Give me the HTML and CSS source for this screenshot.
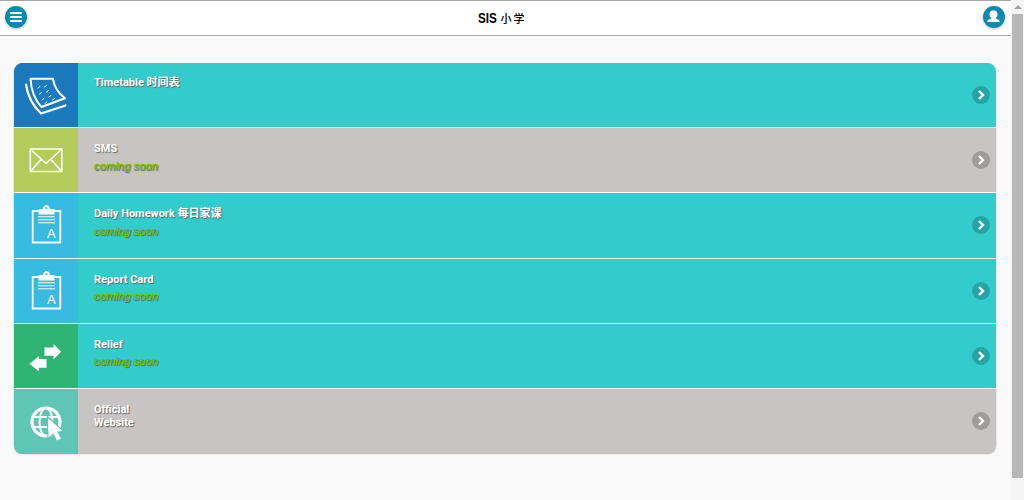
FILE: index.html
```html
<!DOCTYPE html>
<html lang="en">
<head>
<meta charset="utf-8">
<title>SIS 小学</title>
<link rel="stylesheet" href="styles.css">
</head>
<body>
<div class="page">
  <header class="topbar">
    <button class="round" aria-label="Menu">
      <svg viewBox="0 0 22 22" width="22" height="22"><path d="M6 7h10M6 11h10M6 15h10" stroke="#fff" stroke-width="2" stroke-linecap="round" fill="none"/></svg>
    </button>
    <h1 class="brand"><span class="brand-latin">SIS</span><span class="brand-cjk">小学</span></h1>
    <button class="round" aria-label="Profile">
      <svg viewBox="0 0 22 22" width="22" height="22"><path d="M11 4.500c2.200 0 3.500 1.600 3.500 3.700 0 1.500-.7 2.800-1.500 3.500v1c1.600.5 3.600 1 3.600 2.300v1H4.400v-1c0-1.300 2-1.800 3.600-2.300v-1c-.8-.7-1.500-2-1.500-3.500 0-2.100 1.300-3.700 3.500-3.700z" fill="#fff"/></svg>
    </button>
  </header>
  <main class="content">
    <ul class="menu">
      <li class="row teal">
        <div class="tile tile-blue">
          <svg viewBox="0 0 48 48" width="48" height="48" fill="none" stroke="#fff" stroke-linecap="round" stroke-linejoin="round">
            <path d="M8.500 7.800H31c1 7 5 14 12 19.500L19.500 36C12 28 9 18 8.500 7.800z" stroke-width="2"/>
            <path d="M4 13.500C5.500 24 10 34 19 42.500L43.500 34.500" stroke-width="2.200"/>
            <path d="M18 15.500l-2 1.500M24.500 14.500l-2 1.500M19.500 21.500l-2 1.500M26.500 19.500l-2 1.500M22 27.500l-2 1.500M29 24.500l-2 1.500M25 31l-2 1.500M32.500 27.500l-2 1.500" stroke-width="1"/>
          </svg>
        </div>
        <div class="label"><div class="name">Timetable 时间表</div></div>
        <span class="go"><svg viewBox="0 0 18 18" width="18" height="18"><path d="M7 5l4 4-4 4" stroke="#fff" stroke-width="2.400" fill="none"/></svg></span>
      </li>
      <li class="row grey">
        <div class="tile tile-lime">
          <svg viewBox="0 0 40 40" width="40" height="40" fill="none" stroke="#fff" stroke-width="1.600">
            <path d="M4.300 9h31.500v22.500H4.300z"/>
            <path d="M4.300 9 20 23.500 35.800 9M4.300 31.500 15.500 19M35.800 31.500 24.500 19"/>
          </svg>
        </div>
        <div class="label"><div class="name">SMS</div><div class="soon">coming soon</div></div>
        <span class="go"><svg viewBox="0 0 18 18" width="18" height="18"><path d="M7 5l4 4-4 4" stroke="#fff" stroke-width="2.400" fill="none"/></svg></span>
      </li>
      <li class="row teal">
        <div class="tile tile-sky">
          <svg viewBox="0 0 40 40" width="40" height="40" fill="none" stroke="#fff">
            <path d="M12.500 6H6.700v31.500h27.600V6h-5.800" stroke-width="1.800"/>
            <path d="M12.500 9.500V4H17c.4-2.500 1.800-4 3.500-4s3.100 1.500 3.500 4h4.500v5.500z" fill="#fff" stroke="none"/>
            <circle cx="20.500" cy="3" r="1.100" fill="#38bbe0" stroke="none"/>
            <path d="M12 11.800h17M12 14.800h17M12 17.800h17" stroke-width="1"/>
            <text class="a-mark" x="21" y="32.500">A</text>
          </svg>
        </div>
        <div class="label"><div class="name">Daily Homework 每日家课</div><div class="soon">coming soon</div></div>
        <span class="go"><svg viewBox="0 0 18 18" width="18" height="18"><path d="M7 5l4 4-4 4" stroke="#fff" stroke-width="2.400" fill="none"/></svg></span>
      </li>
      <li class="row teal">
        <div class="tile tile-sky">
          <svg viewBox="0 0 40 40" width="40" height="40" fill="none" stroke="#fff">
            <path d="M12.500 6H6.700v31.500h27.600V6h-5.800" stroke-width="1.800"/>
            <path d="M12.500 9.500V4H17c.4-2.500 1.800-4 3.500-4s3.100 1.500 3.500 4h4.500v5.500z" fill="#fff" stroke="none"/>
            <circle cx="20.500" cy="3" r="1.100" fill="#38bbe0" stroke="none"/>
            <path d="M12 11.800h17M12 14.800h17M12 17.800h17" stroke-width="1"/>
            <text class="a-mark" x="21" y="32.500">A</text>
          </svg>
        </div>
        <div class="label"><div class="name">Report Card</div><div class="soon">coming soon</div></div>
        <span class="go"><svg viewBox="0 0 18 18" width="18" height="18"><path d="M7 5l4 4-4 4" stroke="#fff" stroke-width="2.400" fill="none"/></svg></span>
      </li>
      <li class="row teal">
        <div class="tile tile-green">
          <svg viewBox="0 0 40 40" width="40" height="40" fill="#fff">
            <path d="M18.500 11.500h9V8l7.500 7.800-7.500 7.700v-3.700h-9z"/>
            <path d="M20.500 23h-7.500v-3l-9.500 8 9.500 7.300v-3.500h7.500z"/>
          </svg>
        </div>
        <div class="label"><div class="name">Relief</div><div class="soon">coming soon</div></div>
        <span class="go"><svg viewBox="0 0 18 18" width="18" height="18"><path d="M7 5l4 4-4 4" stroke="#fff" stroke-width="2.400" fill="none"/></svg></span>
      </li>
      <li class="row grey">
        <div class="tile tile-mint">
          <svg viewBox="0 0 40 40" width="40" height="40" fill="none" stroke="#fff" stroke-width="2">
            <circle cx="20" cy="21" r="14" stroke-width="3.200"/>
            <ellipse cx="20" cy="21" rx="6.500" ry="14"/>
            <path d="M6 16h28M6 26h20"/>
            <path class="pointer" d="M22 17 36.500 30l-5.500.5 4 7-4 2-3.500-7-5 4z"/>
          </svg>
        </div>
        <div class="label"><div class="name">Official<br>Website</div></div>
        <span class="go"><svg viewBox="0 0 18 18" width="18" height="18"><path d="M7 5l4 4-4 4" stroke="#fff" stroke-width="2.400" fill="none"/></svg></span>
      </li>
    </ul>
  </main>
</div>
<div class="scrollbar" aria-hidden="true">
  <div class="sb-up"></div>
  <div class="sb-thumb"></div>
</div>
</body>
</html>
```
FILE: styles.css
```css
* { box-sizing: border-box; }
html, body { margin: 0; height: 100%; overflow: hidden; }
body {
  display: flex;
  width: 1024px;
  height: 500px;
  background: #f9f9f9;
  font-family: "Liberation Sans", Arial, "Noto Sans CJK SC", sans-serif;
}
.page { flex: 0 0 1011px; display: flex; flex-direction: column; }
.topbar {
  height: 36px;
  display: flex;
  align-items: center;
  justify-content: space-between;
  padding: 0 6px 2px 5px;
  background: #fff;
  border-top: 1px solid #a6a6a6;
  border-bottom: 1px solid #a6a6a6;
}
.round {
  width: 22px;
  height: 22px;
  padding: 0;
  border: 0;
  border-radius: 50%;
  background: radial-gradient(circle, #1490b4 0%, #0b87ab 70%, #0a7fa2 100%);
  box-shadow: 0 1px 3px rgba(0,0,0,.25);
  display: flex;
}
.brand {
  margin: 2px 0 0;
  display: flex;
  align-items: center;
  gap: 5px;
  color: #000;
  transform: translateX(-3px);
}
.brand-latin {
  display: inline-block;
  width: 18px;
  font: bold 15px/16px "Liberation Sans", sans-serif;
  transform: scaleX(.78);
  transform-origin: left center;
}
.brand-cjk { font: 500 11px/16px "Noto Sans CJK SC", sans-serif; letter-spacing: 2px; }
.content { padding: 27px 14px 0 13px; }
.menu {
  list-style: none;
  margin: 0;
  padding: 0;
  border-radius: 9px;
  overflow: hidden;
  border: 1px solid #e8e8e8;
  border-top: 0;
  display: flex;
  flex-direction: column;
}
.row {
  height: 65.2px;
  display: flex;
  align-items: stretch;
  border-bottom: 1px solid #fff;
}
.row:last-child { border-bottom: 0; height: 65px; }
.teal { background: #32cccc; }
.grey { background: #c8c4c3; }
.tile {
  flex: 0 0 63.5px;
  display: flex;
  align-items: center;
  justify-content: center;
}
.tile-blue { background: #1b79bd; }
.tile-lime { background: #b6cb5c; }
.tile-sky { background: #38bbe0; }
.tile-green { background: #2eb573; }
.tile-mint { background: #5fc5b4; }
.a-mark { font: 13px "Liberation Sans", sans-serif; fill: #fff; stroke: none; }
.pointer { fill: #fff; stroke: #5fc5b4; stroke-width: 2.400; paint-order: stroke; }
.label {
  flex: 1;
  padding: 14px 0 0 16.5px;
}
.row:first-child .label { padding-top: 13px; }
.name {
  font: bold 11px/13px Roboto, "Noto Sans CJK SC", sans-serif;
  color: #fff;
  text-shadow: 1px 1px 1px #666;
}
.soon {
  margin-top: 4.500px;
  font: italic 11.300px/13px "Liberation Sans", sans-serif;
  color: #78bc00;
  -webkit-text-stroke: .3px #78bc00;
  text-shadow: 1px 1px 1px #555;
}
.go {
  align-self: center;
  width: 18px;
  height: 18px;
  margin-right: 6px;
  border-radius: 50%;
  background: rgba(0,0,0,.2);
  display: flex;
}
.scrollbar {
  flex: 0 0 13px;
  background: #f5f5f5;
  display: flex;
  flex-direction: column;
  align-items: stretch;
  padding: 0 1px;
}
.sb-up {
  height: 14px;
  display: flex;
  justify-content: center;
  padding-top: 5px;
}
.sb-up::before {
  content: "";
  border-left: 4px solid transparent;
  border-right: 4px solid transparent;
  border-bottom: 4px solid #a3a3a3;
  height: 0;
}
.sb-thumb { height: 464px; background: #b8b8b8; }
```
